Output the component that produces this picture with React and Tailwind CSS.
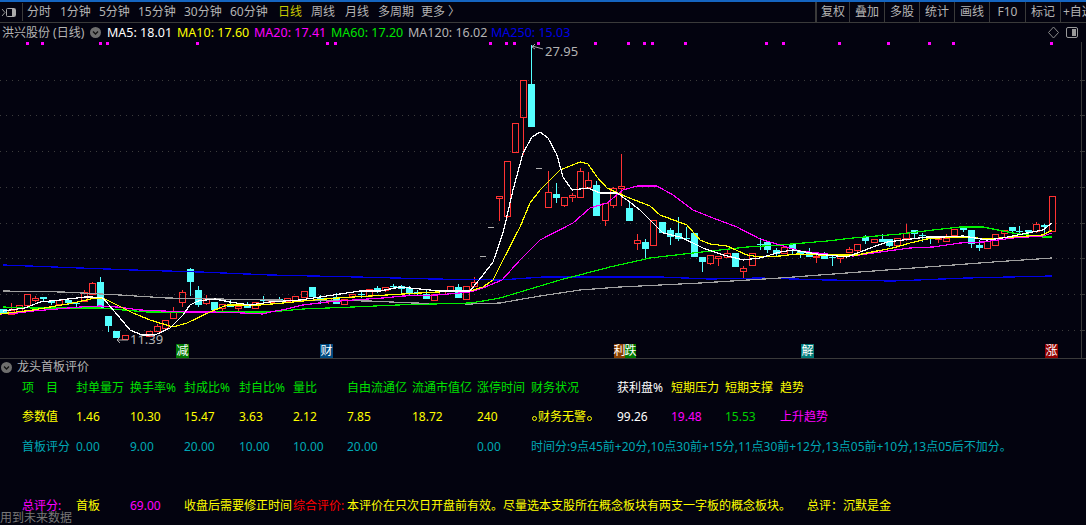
const CANDLES = [
[3,309,314,309,314,'c'],[11,310,314,303,314,'r'],[19,305,311,305,313,'r'],[27,294,305,294,305,'r'],[35,298,300,296,302,'r'],[43,297,299,297,301,'c'],[51,301,303,301,305,'c'],[59,300,304,300,304,'r'],[68,300,303,300,305,'c'],[76,303,304,303,307,'c'],[84,292,301,290,301,'r'],[92,283,294,282,294,'r'],[100,282,308,277,308,'c'],[108,316,326,316,332,'c'],[116,331,338,331,338,'c'],[125,335,339,335,339,'r'],[149,331,336,331,336,'r'],[157,326,331,324,331,'r'],[165,320,328,320,328,'r'],[173,312,318,307,318,'r'],[182,292,302,290,307,'r'],[190,269,282,268,296,'c'],[198,290,305,286,307,'c'],[206,299,303,295,305,'r'],[214,302,310,302,310,'c'],[222,304,308,304,312,'r'],[230,304,307,300,307,'c'],[238,306,308,306,312,'r'],[247,305,308,302,308,'c'],[255,302,308,302,308,'r'],[263,300,301,296,302,'c'],[271,299,302,299,302,'r'],[279,299,300,297,302,'c'],[287,298,301,298,301,'r'],[295,296,300,296,300,'r'],
[304,291,297,291,297,'r'],[312,287,297,287,297,'c'],[320,298,300,295,304,'c'],[328,298,300,298,304,'r'],[336,297,304,293,304,'c'],[344,299,304,299,304,'r'],[352,294,296,294,298,'r'],[361,294,295,292,298,'c'],[369,289,296,289,296,'r'],[377,288,290,286,293,'c'],[385,287,290,287,292,'r'],[393,286,287,284,289,'c'],[401,286,289,285,293,'c'],[409,288,294,286,295,'c'],[417,292,293,290,296,'c'],[426,294,299,290,299,'c'],[434,294,300,294,300,'r'],[442,290,294,290,294,'r'],[450,286,290,286,290,'r'],[458,287,298,284,298,'c'],[466,286,299,286,299,'r'],[474,282,286,277,286,'r'],
[483,256,257,256,257,'d'],[491,227,228,227,228,'d'],[499,196,198,196,221,'r'],[507,161,216,161,218,'r'],[515,123,152,123,152,'r'],[523,80,117,80,155,'r'],[531,84,127,45,127,'c'],[539,168,169,168,169,'d'],[548,192,207,171,207,'r'],[556,194,198,183,203,'c'],[564,197,205,197,207,'r'],[572,195,197,193,202,'r'],[580,171,197,168,198,'r'],[588,180,187,172,187,'r'],[596,185,216,181,216,'c'],[605,203,220,203,226,'r'],[613,188,205,187,208,'r'],[621,186,188,154,206,'r'],[629,208,221,203,221,'c'],[637,240,243,234,250,'r'],[645,242,249,239,258,'c'],[653,220,245,220,245,'r'],[662,222,233,222,233,'c'],[670,230,237,228,245,'c'],[678,233,239,217,241,'c'],[686,238,239,227,241,'c'],[694,233,257,233,257,'c'],[702,257,262,257,272,'c'],[710,255,263,255,265,'r'],[718,256,258,256,266,'r'],[727,253,257,250,257,'r'],[735,253,267,253,267,'c'],[743,268,271,266,278,'r'],[752,253,265,253,265,'r'],[760,244,245,238,250,'c'],
[767,242,250,242,253,'c'],[776,250,254,248,257,'c'],[784,247,253,247,253,'r'],[792,244,249,244,255,'c'],[800,251,254,251,258,'c'],[809,253,257,248,257,'c'],[816,256,257,255,263,'r'],[824,255,259,252,259,'c'],[832,257,258,255,266,'c'],[840,255,258,255,263,'r'],[849,249,252,247,252,'r'],[857,244,250,244,252,'r'],[865,237,241,235,244,'c'],[874,239,242,239,242,'r'],[882,239,242,234,242,'c'],[889,239,246,239,247,'c'],[897,238,245,238,245,'r'],[906,233,238,224,241,'r'],[914,230,234,230,238,'c'],[922,235,236,233,242,'c'],[930,237,239,237,244,'c'],[938,238,239,237,243,'r'],[946,238,241,234,241,'r'],[954,229,235,229,235,'r'],[963,227,230,227,232,'c'],[971,230,244,230,248,'c'],[979,245,248,240,251,'c'],[987,241,248,241,248,'r'],[995,234,245,234,246,'r'],[1004,230,233,230,237,'r'],[1012,227,231,227,233,'c'],[1019,231,232,226,234,'c'],[1028,230,232,230,235,'c'],[1036,224,231,222,233,'r'],[1044,225,227,224,233,'c'],[1052,196,231,196,231,'r'],
];

const MA5 = "3,311 25,308 40,302 60,300 85,297 92,297 103,298 115,312 130,330 142,335 155,335 170,328 183,315 190,305 198,301 215,299 230,302 250,305 270,302 300,300 320,297 360,291 380,291 400,287 440,291 470,291 483,275 493,262 503,233 513,190 523,153 532,137 540,132 548,138 557,155 563,177 572,190 588,188 600,193 617,193 627,200 640,210 652,222 663,233 680,237 693,243 703,248 723,255 743,260 760,258 780,252 793,250 817,254 847,257 860,252 873,247 887,242 903,240 927,237 943,237 963,236 987,240 1003,238 1027,233 1043,230 1052,223";
const MA10 = "0,314 33,310 50,307 73,303 95,298 103,298 117,305 133,313 150,320 173,327 187,323 210,312 227,305 260,305 283,303 303,301 337,298 370,296 403,294 437,292 470,291 483,287 493,280 503,260 520,227 530,203 540,190 560,170 580,162 588,164 597,177 607,188 627,197 650,206 660,215 687,225 700,240 710,244 727,246 747,255 760,257 780,256 797,254 820,255 837,255 857,255 877,251 893,248 910,243 927,239 950,237 967,237 987,239 1013,237 1043,235 1052,230";
const MA20 = "0,314 17,313 33,311 57,309 80,307 100,306 117,307 140,310 187,312 213,312 243,313 263,314 270,312 287,309 303,305 327,302 353,300 383,298 403,296 437,295 470,292 483,288 502,280 520,260 540,240 573,223 590,208 607,203 623,190 637,186 657,186 673,195 693,210 713,218 737,227 760,239 780,245 800,251 827,254 853,256 880,252 910,248 933,247 960,243 983,242 1013,238 1043,236 1052,233";
const MA60 = "3,307 33,308 100,308 147,312 213,312 270,312 303,309 353,307 397,305 470,303 483,301 500,298 530,289 560,280 610,267 650,258 693,253 747,247 780,245 827,241 853,238 900,234 933,230 960,227 983,227 1013,233 1043,237 1052,237";
const MA120 = "3,291 63,292 120,295 167,298 270,300 370,301 413,303 470,304 500,303 540,296 580,290 620,287 700,283 780,278 860,272 927,267 993,262 1052,258";
const MA250 = "3,265 80,268 133,270 200,272 270,275 357,277 433,279 500,280 543,277 660,277 710,279 760,278 827,280 893,281 967,278 1052,276";
const GRID = [80,115,151,187,223,258,294,330];
const MARKS = [27,42,100,107,197,327,335,490,506,514,538,595,628,644,652,685,766,783,839,888,929,953,1051];

function Chevron({ className }) {
  return (
    <svg width="11" height="11" viewBox="0 0 11 11" className={className}>
      <circle cx="5.5" cy="5.5" r="5.5" fill="#6e6e6e" />
      <path d="M3 4.5 L5.5 7 L8 4.5" fill="none" stroke="#111" strokeWidth="1.3" />
    </svg>
  );
}

function Toolbar() {
  const left = [["分时","w-[33px]","#b4b4b4"],["1分钟","w-[39px]","#b4b4b4"],["5分钟","w-[39px]","#b4b4b4"],["15分钟","w-[46px]","#b4b4b4"],["30分钟","w-[46px]","#b4b4b4"],["60分钟","w-[48px]","#b4b4b4"],["日线","w-[33px]","#c8c800"],["周线","w-[34px]","#b4b4b4"],["月线","w-[33px]","#b4b4b4"],["多周期","w-[43px]","#b4b4b4"],["更多 〉","w-[50px]","#b4b4b4"]];
  const right = [["复权","w-[33px]"],["叠加","w-[35px]"],["多股","w-[35px]"],["统计","w-[35px]"],["画线","w-[35px]"],["F10","w-[36px]"],["标记","w-[35px]"]];
  return (
    <div className="flex h-[21px] shrink-0 items-stretch border-b border-[#3a3a3a] text-[12px] leading-[20px]">
      <div className="flex w-[22px] items-center pl-[1px]">
        <svg width="15" height="11" viewBox="0 0 15 11">
          <path d="M1 2 L4 5.5 L1 9" fill="none" stroke="#999" />
          <rect x="5.5" y="1.5" width="9" height="8" rx="1" fill="none" stroke="#aaa" />
          <rect x="11" y="2" width="3" height="7" fill="#aaa" />
        </svg>
      </div>
      <div className="my-[1px] w-px bg-[#3a3a3a]" />
      <div className="flex flex-1 pl-[4px]">
        {left.map(([t, w, c]) => (
          <span key={t} className={`${w} whitespace-nowrap`} style={{ color: c }}>{t}</span>
        ))}
      </div>
      <div className="flex">
        <div className="w-[2px] bg-[#3a3a3a]" />
        {right.map(([t, w]) => (
          <span key={t} className={`${w} border-r border-[#3a3a3a] text-center text-[#b4b4b4]`}>{t}</span>
        ))}
        <span className="w-[25px] overflow-hidden whitespace-nowrap pl-[2px] text-[#b4b4b4]">+自选</span>
      </div>
    </div>
  );
}

function TitleRow() {
  const mas = [["MA5: 18.01","#ffffff","w-[70px]"],["MA10: 17.60","#ffff00","w-[77px]"],["MA20: 17.41","#ff00ff","w-[77px]"],["MA60: 17.20","#00e600","w-[77px]"],["MA120: 16.02","#b4b4b4","w-[83px]"],["MA250: 15.03","#0000e6","w-[80px]"]];
  return (
    <div className="flex h-[19px] shrink-0 items-center text-[12.5px] leading-[19px]">
      <span className="w-[90px] whitespace-nowrap pl-[2px] text-[12px] text-[#b4b4b4]">洪兴股份 (日线)</span>
      <Chevron className="mr-[6px]" />
      {mas.map(([t, c, cw]) => (
        <span key={t} className={`${cw} whitespace-nowrap`} style={{ color: c }}>{t}</span>
      ))}
    </div>
  );
}

function Chart() {
  return (
    <svg width="1086" height="316" viewBox="0 42 1086 316" className="block">
      {GRID.map((y) => (
        <line key={y} x1="0" x2="1081" y1={y + 0.5} y2={y + 0.5} stroke="#3c3c3c" strokeDasharray="1 5" />
      ))}
      {MARKS.map((x) => <rect key={x} x={x - 1} y="42" width="3" height="3" fill="#ff00ff" />)}
      <g shapeRendering="crispEdges">
        {CANDLES.map(([x, t, b, h, l, k]) => {
          if (k === 'd') return <rect key={x} x={x - 3} y={t} width="6" height="1" fill="#b0b0b0" />;
          if (k === 'c') return (
            <g key={x} fill="#54ffff">
              <rect x={x} y={h} width="1" height={l - h} />
              <rect x={x - 3} y={t} width="7" height={Math.max(1, b - t)} />
            </g>
          );
          return (
            <g key={x} fill="#ff3232">
              {h < t && <rect x={x} y={h} width="1" height={t - h} />}
              {l > b && <rect x={x} y={b} width="1" height={l - b} />}
              <rect x={x - 3 + 0.5} y={t + 0.5} width="6" height={Math.max(1, b - t)} fill="none" stroke="#ff3232" />
            </g>
          );
        })}
      </g>
      <g fill="none" shapeRendering="crispEdges" strokeLinejoin="round">
        <polyline points={MA250} stroke="#0000e6" strokeWidth="1.3" />
        <polyline points={MA120} stroke="#a0a0a0" strokeWidth="1.2" />
        <polyline points={MA60} stroke="#00f000" strokeWidth="1.2" />
        <polyline points={MA20} stroke="#ff00ff" strokeWidth="1.2" />
        <polyline points={MA10} stroke="#ffff00" strokeWidth="1.2" />
        <polyline points={MA5} stroke="#ffffff" strokeWidth="1.2" />
      </g>
      <path d="M532 46 L543 49" stroke="#aaa" fill="none" />
      <path d="M532 47 L535 44 M532 47 L535 49" stroke="#aaa" fill="none" />
      <text x="545" y="56" fill="#b4b4b4" fontSize="13">27.95</text>
      <path d="M117 340 L128 340 M117 340 L120 337 M117 340 L120 343" stroke="#aaa" fill="none" />
      <text x="130" y="344" fill="#b4b4b4" fontSize="13">11.39</text>
      <rect x="1081" y="42" width="1" height="316" fill="#3a3a3a" />
      {GRID.map((y) => <rect key={y} x="1082" y={y} width="3" height="1" fill="#3a3a3a" />)}
    </svg>
  );
}

function Tag({ className, children }) {
  return (
    <span className={`absolute bottom-0 flex h-[14px] items-center justify-center text-[12px] leading-none text-white ${className}`}>{children}</span>
  );
}

const COLS = "grid grid-cols-[54px_54px_54px_55px_54px_54px_65px_65px_54px_86px_54px_54px_55px_1fr] h-[29.5px] items-center whitespace-nowrap text-[12px] pl-[22px]";

function Row({ cells, color }) {
  return (
    <div className={COLS} style={{ color }}>
      {cells.map(([t, c], i) => <span key={i} style={c ? { color: c } : undefined}>{t}</span>)}
    </div>
  );
}

function Ring() {
  return <span className="mx-[1px] inline-block h-[5px] w-[5px] rounded-full border border-[#ffff00] align-middle" />;
}

export default function App() {
  const G = "#00e000", Y = "#ffff00", T = "#00a8b4", M = "#ff00ff";
  return (
    <div className="flex h-[525px] w-[1086px] flex-col overflow-hidden bg-[#03030f]" style={{ fontFamily: '"Noto Sans","Noto Sans CJK SC",sans-serif' }}>
      <div className="h-[2px] shrink-0 bg-[#1565c0]" />
      <Toolbar />
      <TitleRow />
      <div className="relative h-[316px] shrink-0">
        <Chart />
        <svg width="35" height="14" viewBox="0 0 35 14" className="absolute right-[3px] -top-[16px]">
          <path d="M5.5 1 L10.5 6.5 L5.5 12 L0.5 6.5 Z" fill="none" stroke="#8a8a8a" />
          <rect x="18.5" y="1.5" width="11" height="10" rx="1.5" fill="none" stroke="#9a9a9a" />
          <rect x="24" y="3" width="4" height="7" fill="#9a9a9a" />
        </svg>
        <Tag className="left-[176px] w-[13px] bg-[#007800]">减</Tag>
        <Tag className="left-[320px] w-[13px] bg-[#004a80]">财</Tag>
        <Tag className="left-[614px] w-[11px] bg-[#8a4000]">利</Tag>
        <Tag className="left-[625px] w-[11px] bg-[#007800]">跌</Tag>
        <Tag className="left-[801px] w-[13px] bg-[#007a78]">解</Tag>
        <Tag className="left-[1045px] w-[13px] bg-[#900000]">涨</Tag>
      </div>
      <div className="h-px shrink-0 bg-[#3a3a3a]" />
      <div className="flex-1">
        <div className="flex h-[16px] items-center pl-[1px] text-[12px] text-[#b4b4b4]">
          <Chevron className="mr-[5px]" />
          <span>龙头首板评价</span>
        </div>
        <div className="-mt-[2px]">
          <Row color={G} cells={[["项　目"],["封单量万"],["换手率%"],["封成比%"],["封自比%"],["量比"],["自由流通亿"],["流通市值亿"],["涨停时间"],["财务状况"],["获利盘%","#ffffff"],["短期压力",Y],["短期支撑",Y],["趋势",Y]]} />
          <Row color={Y} cells={[["参数值"],["1.46"],["10.30"],["15.47"],["3.63"],["2.12"],["7.85"],["18.72"],["240"],[<><Ring />财务无警<Ring /></>],["99.26","#ffffff"],["19.48",M],["15.53","#00d000"],["上升趋势",M]]} />
          <Row color={T} cells={[["首板评分"],["0.00"],["9.00"],["20.00"],["10.00"],["10.00"],["20.00"],[""],["0.00"],["时间分:9点45前+20分,10点30前+15分,11点30前+12分,13点05前+10分,13点05后不加分。"]]} />
          <div className="h-[29.5px]" />
          <div className="flex h-[29.5px] items-center whitespace-nowrap pl-[22px] text-[12px] leading-[12px] text-[#ffff00]">
            <span className="w-[54px] text-[#ff00ff]">总评分:</span>
            <span className="w-[54px]">首板</span>
            <span className="w-[54px] text-[#ff00ff]">69.00</span>
            <span className="w-[109px]">收盘后需要修正时间</span>
            <span className="w-[54px] text-[#ff0000]">综合评价:</span>
            <span className="w-[460px]">本评价在只次日开盘前有效。尽量选本支股所在概念板块有两支一字板的概念板块。</span>
            <span>总评：沉默是金</span>
          </div>
        </div>
        <div className="-mt-[9.5px] whitespace-nowrap text-[12px] leading-[14px] text-[#777777]">用到未来数据</div>
      </div>
    </div>
  );
}
